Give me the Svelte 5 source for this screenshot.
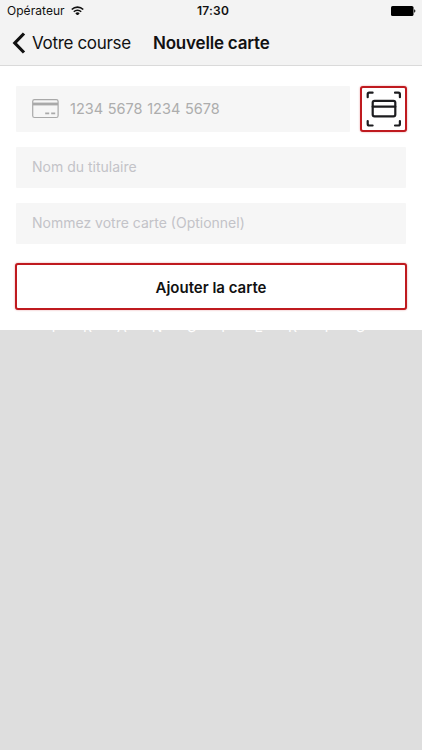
<script lang="ts">
  let holder = $state("");
  let label = $state("");
</script>

<div class="screen">
  <header>
    <div class="status">
      <span class="carrier">
        Opérateur
        <svg class="wifi" viewBox="0 0 12 9">
          <path d="M0.7 3.2a7.5 7.5 0 0 1 10.6 0M2.6 5.3a4.8 4.8 0 0 1 6.8 0" />
          <path class="dot" d="M4 6.8a2.8 2.8 0 0 1 4 0L6 8.9z" />
        </svg>
      </span>
      <span class="time">17:30</span>
      <svg class="battery" viewBox="0 0 25 10">
        <rect x="0" y="0" width="22.5" height="10" rx="1.6" />
        <path d="M23.2 3.3c1.6.5 1.6 2.9 0 3.4z" />
      </svg>
    </div>
    <nav>
      <button class="back">
        <svg viewBox="0 0 14 22">
          <path d="M12 1.5 2.8 11 12 20.5" />
        </svg>
        <span>Votre course</span>
      </button>
      <h1>Nouvelle carte</h1>
    </nav>
  </header>

  <main>
    <div class="card-row">
      <div class="field number">
        <svg viewBox="0 0 27 20">
          <rect class="outline" x="0.7" y="0.7" width="25.4" height="17.8" rx="1.8" />
          <path class="stripe" d="M1 5h25" />
          <path class="dash" d="M13.2 14.4h4M19.2 14.4h4" />
        </svg>
        <span>1234 5678 1234 5678</span>
      </div>
      <button class="outlined scan" aria-label="Scanner">
        <svg viewBox="0 0 36 36">
          <path d="M1.7 6.2V3.2Q1.7 1.7 3.2 1.7H6.6M29 1.7h3.4q1.5 0 1.5 1.5V6.2M33.9 30v3q0 1.5-1.5 1.5H29M6.6 34.5H3.2q-1.5 0-1.5-1.5V30" />
          <rect x="6.7" y="9.8" width="22.6" height="15.6" rx="1.8" />
          <path d="M6.7 15.7h22.6" />
        </svg>
      </button>
    </div>
    <input class="field holder" placeholder="Nom du titulaire" bind:value={holder} />
    <input class="field label" placeholder="Nommez votre carte (Optionnel)" bind:value={label} />
    <button class="outlined submit">Ajouter la carte</button>
  </main>

  <div class="backdrop">
    <p>TRANSFERTS</p>
  </div>
</div>

<style>
  .screen {
    width: 422px;
    height: 750px;
    display: flex;
    flex-direction: column;
    overflow: hidden;
    background: #fff;
    color: #111;
    font-family: Inter, "Liberation Sans", sans-serif;
  }
  button {
    border: 0;
    padding: 0;
    background: none;
    color: inherit;
    font: inherit;
  }
  svg {
    display: block;
    fill: none;
  }
  header {
    box-sizing: border-box;
    height: 66px;
    background: #f3f3f3;
    border-bottom: 1px solid #dadada;
  }
  .status {
    height: 21px;
    padding: 0 6px 0 7px;
    display: grid;
    grid-template-columns: 1fr auto 1fr;
    align-items: center;
    font-size: 12px;
  }
  .carrier {
    display: flex;
    align-items: center;
    gap: 6px;
    letter-spacing: 0.05px;
  }
  .wifi {
    width: 13px;
    height: 9.75px;
    stroke: #111;
    stroke-width: 1.5;
  }
  .wifi .dot {
    fill: #111;
    stroke: none;
  }
  .time {
    margin-left: 3px;
    font-weight: 600;
    letter-spacing: 0.25px;
  }
  .battery {
    width: 25px;
    height: 10px;
    justify-self: end;
    fill: #000;
  }
  nav {
    height: 44px;
    display: flex;
    align-items: center;
    padding-left: 12px;
  }
  .back {
    display: flex;
    align-items: center;
    gap: 6px;
    width: 141px;
    font-size: 17px;
    letter-spacing: -0.33px;
    white-space: nowrap;
  }
  .back svg {
    width: 14px;
    height: 22px;
    stroke: #111;
    stroke-width: 3.2;
  }
  h1 {
    margin: 0;
    font-size: 17px;
    font-weight: 600;
    letter-spacing: -0.2px;
  }
  main {
    box-sizing: border-box;
    height: 264px;
    padding: 20px 15px 0;
    display: flex;
    flex-direction: column;
  }
  .card-row {
    display: flex;
    justify-content: space-between;
    margin-bottom: 15px;
  }
  .field {
    box-sizing: border-box;
    border: 0;
    border-radius: 1px;
    margin: 0 1px 0 1px;
    background: #f6f6f6;
    font: 14px Inter, "Liberation Sans", sans-serif;
  }
  .number {
    width: 334px;
    height: 46px;
    display: flex;
    align-items: center;
    gap: 11px;
    padding: 0 0 1px 16px;
    font-size: 14.5px;
    word-spacing: 0.6px;
    color: #adadad;
  }
  .number svg {
    width: 27px;
    height: 20px;
    stroke: #a9a9a9;
  }
  .outline {
    stroke-width: 1.2;
  }
  .stripe {
    stroke-width: 2.8;
  }
  .dash {
    stroke-width: 1.8;
  }
  .holder,
  .label {
    height: 41px;
    padding: 0 16px 2px;
    margin-bottom: 15px;
  }
  .label {
    margin-bottom: 19px;
  }
  .field::placeholder {
    color: #c3c3c8;
    opacity: 1;
  }
  .outlined {
    box-sizing: border-box;
    border: 2px solid #bf1a1f;
    border-radius: 3px;
    background: #fff;
    box-shadow: 0 0 2px rgba(196, 22, 28, 0.45);
  }
  .scan {
    width: 47px;
    height: 46px;
    display: grid;
    place-items: center;
  }
  .scan svg {
    width: 36px;
    height: 36px;
    stroke: #1c1c1f;
    stroke-width: 2.2;
    stroke-linecap: round;
  }
  .submit {
    height: 47px;
    padding-top: 1px;
    font-size: 15px;
    font-weight: 600;
  }
  .backdrop {
    flex: 1;
    overflow: hidden;
    background: #dedede;
  }
  /* only the feet of the letters show below the sheet */
  .backdrop p {
    margin: -12px 0 0 49px;
    font-size: 14px;
    line-height: 17px;
    letter-spacing: 25px;
    white-space: nowrap;
    color: #fff;
  }
</style>
